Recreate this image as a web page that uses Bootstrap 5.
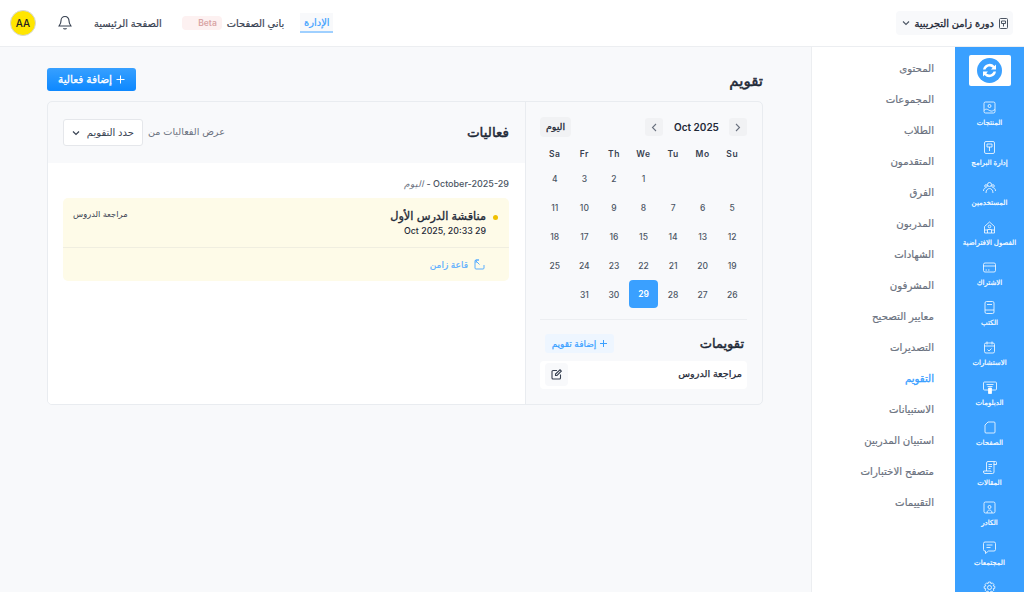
<!DOCTYPE html>
<html lang="ar" dir="rtl">
<head>
<meta charset="utf-8">
<title>تقويم</title>
<link href="https://cdn.jsdelivr.net/npm/bootstrap@5.3.0/dist/css/bootstrap.min.css" rel="stylesheet">
<style>
html,body{height:592px;overflow:hidden}
body{font-family:Inter,"Noto Sans","DejaVu Sans",sans-serif;background:#f8f9fb;color:#1f2937;font-size:11px}
svg{display:block;flex:none}
.topbar{height:47px;background:#fff;border-bottom:1px solid #eceef1;padding:0 11px 0 10px}
.course-pick{height:24px;width:117px;background:#f8f9fb;border-radius:4px;padding:0 4px 0 6px;font-size:9.9px;color:#1f2937;white-space:nowrap;-webkit-text-stroke:.35px #1f2937}
.tnav{font-size:9.9px;color:#374151;-webkit-text-stroke:.2px #374151}
.tnav-active{color:#3aa0ff;-webkit-text-stroke:.2px #3aa0ff;background:#f8f9fb;border-bottom:2px solid #9fd0ff;height:20px;width:33px;margin-left:16px;justify-content:center}
.beta-pill{background:#fdf1f1;color:#d9a5a5;border-radius:4px;width:40px;height:14px;font-size:8.5px;font-weight:600;padding-right:5px;line-height:14px;margin-right:5px}
.home-link{margin-right:20px}
.bell-wrap{margin-right:22px}
.avatar-aa{width:26px;height:26px;border-radius:50%;background:#ffe600;border:1px solid #d5d7da;font-size:10px;font-weight:500;color:#222;margin-right:22px;justify-content:center}
.shell{height:545px}
.rail{width:69px;flex:none;background:#3aa0ff;color:#fff;overflow:hidden}
.logo-box{width:42px;height:31px;background:#fff;border-radius:2px;margin:8px auto 12px}
.rail-item{height:40px;padding-top:3px;font-size:7px;line-height:11px;white-space:nowrap;-webkit-text-stroke:.2px #fff}
.rail-item svg{margin-bottom:3px}
.subnav{width:144px;flex:none;background:#fff;border-left:1px solid #eceef1;padding:6px 21px 0 0}
.sub-item{height:31px;line-height:31px;font-size:10.2px;color:#6b7280;-webkit-text-stroke:.2px #6b7280}
.sub-item-on{color:#3aa0ff;-webkit-text-stroke:.35px #3aa0ff}
.content{padding:21px 48px 0 47px;width:811px;flex:none}
.page-title{font-size:15px;font-weight:400;color:#1f2937;margin:3px 0 0;-webkit-text-stroke:.5px #1f2937}
.add-btn{width:89px;height:23px;background:linear-gradient(180deg,#37a0ff,#0d88ff);color:#fff;border-radius:3px;font-size:10.5px;border:0;padding:0;-webkit-text-stroke:.3px #fff}
.main-card{height:304px;margin-top:10px;border:1px solid #e9ecf0;border-radius:5px;overflow:hidden;background:#f8f9fb}
.cal-side{width:237px;flex:none;border-left:1px solid #e9ecf0;padding:15px 15px 0 14px}
.nav-sq{width:18px;height:18px;background:#f1f2f4;border-radius:3px;justify-content:center;color:#6b7280}
.month-lbl{font-size:10px;font-weight:600;color:#1f2937;margin:0 11px;direction:ltr;width:44px;text-align:center;white-space:nowrap}
.today-chip{width:31px;height:20px;background:#f1f2f4;border-radius:4px;font-size:9.5px;justify-content:center;-webkit-text-stroke:.3px #1f2937}
.cal-grid{display:grid;grid-template-columns:repeat(7,1fr);margin-top:4px;direction:rtl;text-align:center}
.cal-head{height:23px;line-height:27px;font-size:8.5px;font-weight:600;color:#374151;letter-spacing:.6px}
.cal-num{height:29px;line-height:31px;font-size:8.5px;font-weight:500;color:#4b5563}
.cal-on{background:#3aa0ff;color:#fff;border-radius:4px;font-weight:600;height:28px;line-height:28px}
.side-rule{border-top:1px solid #eceef1;margin-top:10px}
.cals-row{margin-top:14px;padding-right:3px}
.cals-title{font-size:13px;color:#1f2937;-webkit-text-stroke:.45px #1f2937}
.add-cal{width:69px;height:19px;background:#eef6ff;color:#3aa0ff;border-radius:3px;font-size:9px;justify-content:center;margin-left:5px;-webkit-text-stroke:.2px #3aa0ff}
.cal-row{height:28px;background:#fff;border-radius:4px;margin-top:7px;padding:0 5px;font-size:9.7px;-webkit-text-stroke:.25px #1f2937}
.edit-sq{width:23px;height:23px;background:#f8f9fb;border-radius:4px;justify-content:center}
.ev-head{height:61px;padding:0 16px 0 15px}
.ev-title{font-size:13.5px;color:#1f2937;-webkit-text-stroke:.45px #1f2937}
.ev-note{font-size:9.7px;color:#6b7280}
.pick-box{width:80px;height:27px;background:#fff;border:1px solid #e5e7eb;border-radius:3px;font-size:10px;padding:0 8px;color:#374151;margin-right:5px}
.ev-body{height:241px;background:#fff;padding:13px 16px 13px 15px}
.ev-date{font-size:9px;font-weight:500;color:#4b5563;height:22px;line-height:16px}
.ev-date i{font-weight:400;color:#6b7280}
.ev-box{height:83px;background:#fefbe8;border-radius:5px}
.ev-top{height:50px;border-bottom:1px solid #f0eee0;padding:10px 11px 0 10px}
.ev-dot{width:5px;height:5px;border-radius:50%;background:#f0c000;margin:7px 0 0 7px}
.ev-name{font-size:11.3px;line-height:17px;color:#1f2937;-webkit-text-stroke:.35px #1f2937}
.ev-when{font-size:8.8px;font-weight:500;line-height:12px;color:#1f2937}
.ev-tag{font-size:8.3px;color:#374151}
.ev-link{color:#5aaeff;font-size:9px;gap:6px;padding:10px 24px 0 0;-webkit-text-stroke:.2px #5aaeff}
</style>
</head>
<body>
<header class="topbar d-flex align-items-center justify-content-between">
  <div class="course-pick d-flex align-items-center gap-1">
    <svg width="11" height="11" viewBox="0 0 11 11" fill="none" stroke="#4b5563"><rect x="1.500" y=".5" width="8" height="10" rx="1"/><path d="M3.500 3h4v2.500h-4zM5.500 5.500v3"/></svg>
    <span class="flex-grow-1">دورة زامن التجريبية</span>
    <svg width="8" height="6" viewBox="0 0 8 6" fill="none" stroke="#4b5563" stroke-width="1.100"><path d="M1 1.500l3 3 3-3"/></svg>
  </div>
  <nav class="d-flex align-items-center">
    <span class="tnav tnav-active d-flex align-items-center">الإدارة</span>
    <span class="tnav">باني الصفحات</span>
    <span class="beta-pill">Beta</span>
    <span class="tnav home-link">الصفحة الرئيسية</span>
    <svg class="bell-wrap" width="14" height="16" viewBox="0 0 14 16" fill="none" stroke="#374151" stroke-width="1.100"><path d="M7 1.500c-2.600 0-4 2-4 4.300 0 3-1.500 4.200-2 5.200h12c-.5-1-2-2.200-2-5.200 0-2.300-1.400-4.300-4-4.300zM5.500 13.200c.4 1 2.600 1 3 0"/></svg>
    <span class="avatar-aa d-flex align-items-center">AA</span>
  </nav>
</header>
<div class="shell d-flex">
  <aside class="rail">
    <div class="logo-box d-flex align-items-center justify-content-center">
      <svg width="25" height="25" viewBox="0 0 25 25"><circle cx="12.500" cy="12.500" r="12.500" fill="#3aa0ff"/><path d="M6 11.500a6.700 6.700 0 0 1 11.500-3.500l1.500-1.500v5h-5l1.700-1.700a4.300 4.300 0 0 0-7.200 1.700zM19 13.500a6.700 6.700 0 0 1-11.500 3.500l-1.500 1.500v-5h5l-1.700 1.700a4.300 4.300 0 0 0 7.200-1.700z" fill="#fff"/></svg>
    </div>
    <div class="rail-item d-flex flex-column align-items-center"><svg width="13" height="13" viewBox="0 0 13 13" fill="none" stroke="#fff" stroke-width=".8"><rect x="1" y="1" width="11" height="11" rx="1.500"/><circle cx="6.500" cy="5" r="1.500"/><path d="M1 9.500c2-2 3-1.500 5.500 0s3.500 0 5.500-1"/></svg><span>المنتجات</span></div>
    <div class="rail-item d-flex flex-column align-items-center"><svg width="13" height="13" viewBox="0 0 13 13" fill="none" stroke="#fff" stroke-width=".8"><rect x="1.500" y=".5" width="10" height="12" rx="1.500"/><path d="M4 3h5v3H4zM6.500 6v4"/></svg><span>إدارة البرامج</span></div>
    <div class="rail-item d-flex flex-column align-items-center"><svg width="13" height="13" viewBox="0 0 13 13" fill="none" stroke="#fff" stroke-width=".8"><circle cx="6.500" cy="3.500" r="2"/><circle cx="3" cy="5" r="1.300"/><circle cx="10" cy="5" r="1.300"/><path d="M3 12c0-6 7-6 7 0M.5 10c0-2 1-3 2-3M12.500 10c0-2-1-3-2-3"/></svg><span>المستخدمين</span></div>
    <div class="rail-item d-flex flex-column align-items-center"><svg width="13" height="13" viewBox="0 0 13 13" fill="none" stroke="#fff" stroke-width=".8"><path d="M1.500 12V5.500L6.500 1l5 4.500V12zM4.500 12V8.500h4V12M1.500 9h3M8.500 9h3"/><circle cx="6.500" cy="5.500" r="1.300"/></svg><span>الفصول الافتراضية</span></div>
    <div class="rail-item d-flex flex-column align-items-center"><svg width="13" height="13" viewBox="0 0 13 13" fill="none" stroke="#fff" stroke-width=".8"><rect x=".5" y="2" width="12" height="9" rx="1.500"/><path d="M.5 5h12M2.500 9h1.500M5 9h1.500"/></svg><span>الاشتراك</span></div>
    <div class="rail-item d-flex flex-column align-items-center"><svg width="13" height="13" viewBox="0 0 13 13" fill="none" stroke="#fff" stroke-width=".8"><rect x="2" y=".5" width="9" height="12" rx="1.500"/><path d="M2 9h9M4 3.500h5"/></svg><span>الكتب</span></div>
    <div class="rail-item d-flex flex-column align-items-center"><svg width="13" height="13" viewBox="0 0 13 13" fill="none" stroke="#fff" stroke-width=".8"><rect x="1.500" y="2" width="10" height="10" rx="1.500"/><path d="M1.500 5h10M4 .5v3M9 .5v3M4.500 8.500l1.500 1.500 2.500-2.500"/></svg><span>الاستشارات</span></div>
    <div class="rail-item d-flex flex-column align-items-center"><svg width="14" height="13" viewBox="0 0 14 13" fill="none" stroke="#fff" stroke-width=".8"><rect x=".5" y="1" width="13" height="8" rx="1"/><path d="M3.500 3.500h7M4.500 5.500h5"/><path d="M5.500 7h3v5.500h-3z" fill="#fff"/></svg><span>الدبلومات</span></div>
    <div class="rail-item d-flex flex-column align-items-center"><svg width="13" height="13" viewBox="0 0 13 13" fill="none" stroke="#fff" stroke-width=".8"><path d="M5 1h6a1 1 0 0 1 1 1v9a1 1 0 0 1-1 1H3a1 1 0 0 1-1-1V4z"/></svg><span>الصفحات</span></div>
    <div class="rail-item d-flex flex-column align-items-center"><svg width="14" height="13" viewBox="0 0 14 13" fill="none" stroke="#fff" stroke-width=".8"><path d="M3.500 10V2a1.500 1.500 0 0 1 1.500-1.500h7.500a1 1 0 0 1 1 1v2h-3M11 1v10a1.500 1.500 0 0 1-1.500 1.500H2A1.500 1.500 0 0 1 .5 11v-1h7.500v1M5.500 3.500h3.500M5.500 5.500h3.500M5.500 7.500h2"/></svg><span>المقالات</span></div>
    <div class="rail-item d-flex flex-column align-items-center"><svg width="13" height="13" viewBox="0 0 13 13" fill="none" stroke="#fff" stroke-width=".8"><rect x="1" y="1" width="11" height="11" rx="1.500"/><circle cx="6.500" cy="6" r="1.500"/><path d="M4 12c0-4 5-4 5 0"/></svg><span>الكادر</span></div>
    <div class="rail-item d-flex flex-column align-items-center"><svg width="13" height="13" viewBox="0 0 13 13" fill="none" stroke="#fff" stroke-width=".8"><path d="M2 1h9a1.500 1.500 0 0 1 1.500 1.500v6A1.500 1.500 0 0 1 11 10H5.500l-3 2.500V10H2A1.500 1.500 0 0 1 .5 8.500v-6A1.500 1.500 0 0 1 2 1zM3.500 4h6M3.500 6.500h4"/></svg><span>المجتمعات</span></div>
    <div class="rail-item d-flex flex-column align-items-center"><svg width="13" height="13" viewBox="0 0 13 13" fill="none" stroke="#fff" stroke-width=".8"><circle cx="6.500" cy="6.500" r="2"/><path d="M5.500 1h2l.4 1.600 1.500-.7 1.500 1.500-.7 1.500 1.600.4v2l-1.600.4.700 1.500-1.500 1.500-1.500-.7-.4 1.600h-2l-.4-1.600-1.500.7L2.100 9.200l.7-1.500L1.200 7.300v-2l1.600-.4-.7-1.500 1.500-1.500 1.500.7z"/></svg></div>
  </aside>
  <nav class="subnav">
    <div class="sub-item">المحتوى</div>
    <div class="sub-item">المجموعات</div>
    <div class="sub-item">الطلاب</div>
    <div class="sub-item">المتقدمون</div>
    <div class="sub-item">الفرق</div>
    <div class="sub-item">المدربون</div>
    <div class="sub-item">الشهادات</div>
    <div class="sub-item">المشرفون</div>
    <div class="sub-item">معايير التصحيح</div>
    <div class="sub-item">التصديرات</div>
    <div class="sub-item sub-item-on">التقويم</div>
    <div class="sub-item">الاستبيانات</div>
    <div class="sub-item">استبيان المدربين</div>
    <div class="sub-item">متصفح الاختبارات</div>
    <div class="sub-item">التقييمات</div>
  </nav>
  <main class="content">
    <div class="d-flex align-items-center justify-content-between">
      <h1 class="page-title">تقويم</h1>
      <button class="add-btn d-flex align-items-center justify-content-center gap-1" type="button"><svg width="9" height="9" viewBox="0 0 9 9" stroke="#fff"><path d="M4.500.5v8M.5 4.500h8"/></svg><span>إضافة فعالية</span></button>
    </div>
    <div class="main-card d-flex">
      <section class="cal-side">
        <div class="d-flex align-items-center justify-content-between">
          <div class="d-flex align-items-center">
            <span class="nav-sq d-flex align-items-center"><svg width="6" height="9" viewBox="0 0 6 9" fill="none" stroke="#6b7280" stroke-width="1.100"><path d="M1 1l3.500 3.500L1 8"/></svg></span>
            <span class="month-lbl">Oct 2025</span>
            <span class="nav-sq d-flex align-items-center"><svg width="6" height="9" viewBox="0 0 6 9" fill="none" stroke="#6b7280" stroke-width="1.100"><path d="M5 1L1.500 4.500 5 8"/></svg></span>
          </div>
          <span class="today-chip d-flex align-items-center">اليوم</span>
        </div>
        <div class="cal-grid">
          <div class="cal-head">Su</div><div class="cal-head">Mo</div><div class="cal-head">Tu</div><div class="cal-head">We</div><div class="cal-head">Th</div><div class="cal-head">Fr</div><div class="cal-head">Sa</div>
          <div class="cal-num"></div><div class="cal-num"></div><div class="cal-num"></div><div class="cal-num">1</div><div class="cal-num">2</div><div class="cal-num">3</div><div class="cal-num">4</div>
          <div class="cal-num">5</div><div class="cal-num">6</div><div class="cal-num">7</div><div class="cal-num">8</div><div class="cal-num">9</div><div class="cal-num">10</div><div class="cal-num">11</div>
          <div class="cal-num">12</div><div class="cal-num">13</div><div class="cal-num">14</div><div class="cal-num">15</div><div class="cal-num">16</div><div class="cal-num">17</div><div class="cal-num">18</div>
          <div class="cal-num">19</div><div class="cal-num">20</div><div class="cal-num">21</div><div class="cal-num">22</div><div class="cal-num">23</div><div class="cal-num">24</div><div class="cal-num">25</div>
          <div class="cal-num">26</div><div class="cal-num">27</div><div class="cal-num">28</div><div class="cal-num cal-on">29</div><div class="cal-num">30</div><div class="cal-num">31</div><div class="cal-num"></div>
        </div>
        <div class="side-rule"></div>
        <div class="cals-row d-flex align-items-center justify-content-between">
          <span class="cals-title">تقويمات</span>
          <span class="add-cal d-flex align-items-center gap-1"><svg width="7" height="7" viewBox="0 0 7 7" stroke="#3aa0ff"><path d="M3.500 0v7M0 3.500h7"/></svg><span>إضافة تقويم</span></span>
        </div>
        <div class="cal-row d-flex align-items-center justify-content-between">
          <span>مراجعة الدروس</span>
          <span class="edit-sq d-flex align-items-center"><svg width="11" height="11" viewBox="0 0 11 11" fill="none" stroke="#374151" stroke-width="1.100"><path d="M6 1.500H2A1 1 0 0 0 1 2.500v6.500a1 1 0 0 0 1 1h6.500a1 1 0 0 0 1-1V5.500M4.500 6.500V5L9 .8l1.300 1.300L6 6.500z"/></svg></span>
        </div>
      </section>
      <section class="flex-grow-1">
        <div class="ev-head d-flex align-items-center justify-content-between">
          <span class="ev-title">فعاليات</span>
          <div class="d-flex align-items-center">
            <span class="ev-note">عرض الفعاليات من</span>
            <span class="pick-box d-flex align-items-center justify-content-between"><span>حدد التقويم</span><svg width="8" height="6" viewBox="0 0 8 6" fill="none" stroke="#374151" stroke-width="1.200"><path d="M1 1.500l3 3 3-3"/></svg></span>
          </div>
        </div>
        <div class="ev-body">
          <div class="ev-date"><span dir="ltr">October-2025-29</span> - <i>اليوم</i></div>
          <div class="ev-box">
            <div class="ev-top d-flex">
              <span class="ev-dot"></span>
              <div class="flex-grow-1">
                <div class="ev-name">مناقشة الدرس الأول</div>
                <div class="ev-when">29 Oct 2025, 20:33</div>
              </div>
              <span class="ev-tag">مراجعة الدروس</span>
            </div>
            <div class="ev-link d-flex align-items-center"><svg width="11" height="11" viewBox="0 0 11 11" fill="none" stroke="#5aaeff"><path d="M5 1H2a1 1 0 0 0-1 1v7a1 1 0 0 0 1 1h7a1 1 0 0 0 1-1V6M1 1l4.500 4.500M2 4V1h3"/></svg><span>قاعة زامن</span></div>
          </div>
        </div>
      </section>
    </div>
  </main>
</div>
<script src="https://cdn.jsdelivr.net/npm/bootstrap@5.3.0/dist/js/bootstrap.bundle.min.js"></script>
</body>
</html>
